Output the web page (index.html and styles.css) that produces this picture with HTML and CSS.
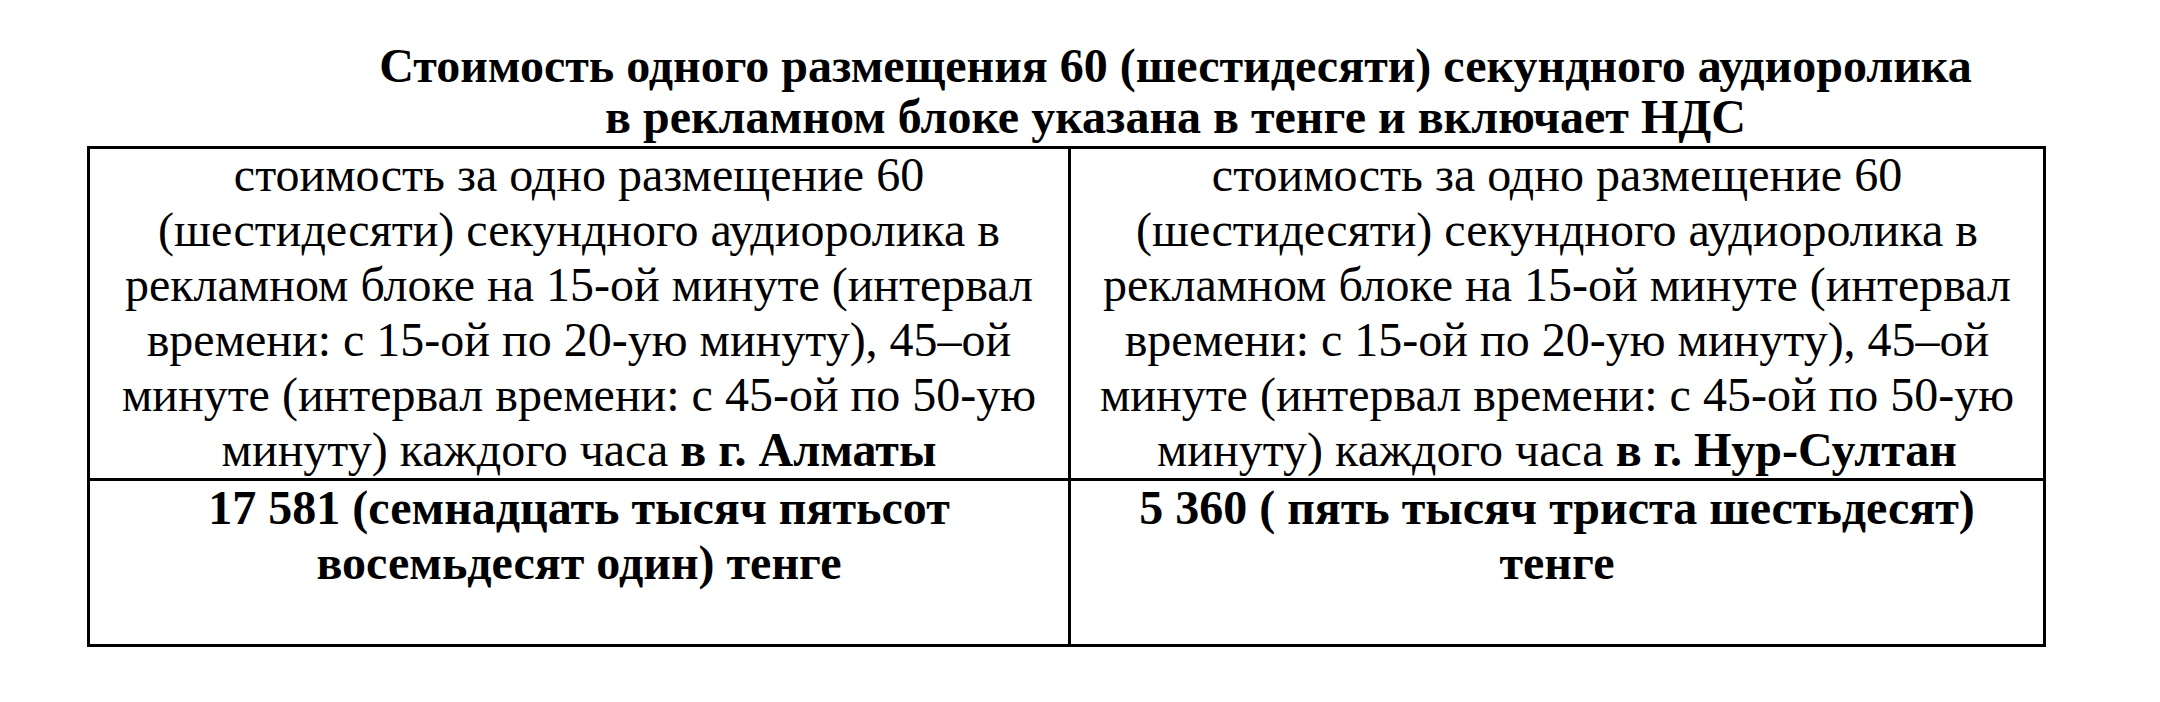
FILE: index.html
```html
<!DOCTYPE html>
<html>
<head>
<meta charset="utf-8">
<title>Стоимость размещения</title>
<link rel="stylesheet" href="styles.css">
</head>
<body>
<div class="page">
  <h1 class="title">Стоимость одного размещения 60 (шестидесяти) секундного аудиоролика<br>в рекламном блоке указана в тенге и включает НДС</h1>
  <table class="prices">
    <tr class="row-desc">
      <td class="cell-a"><p class="cell-text">стоимость за одно размещение 60<br>(шестидесяти) секундного аудиоролика в<br>рекламном блоке на 15-ой минуте (интервал<br>времени: с 15-ой по 20-ую минуту), 45–ой<br>минуте (интервал времени: с 45-ой по 50-ую<br>минуту) каждого часа <b>в г. Алматы</b></p></td>
      <td class="cell-b"><p class="cell-text">стоимость за одно размещение 60<br>(шестидесяти) секундного аудиоролика в<br>рекламном блоке на 15-ой минуте (интервал<br>времени: с 15-ой по 20-ую минуту), 45–ой<br>минуте (интервал времени: с 45-ой по 50-ую<br>минуту) каждого часа <b>в г. Нур-Султан</b></p></td>
    </tr>
    <tr class="row-price">
      <td class="cell-a"><p class="cell-text price">17 581 (семнадцать тысяч пятьсот<br>восемьдесят один) тенге</p></td>
      <td class="cell-b"><p class="cell-text price">5 360 ( пять тысяч триста шестьдесят)<br>тенге</p></td>
    </tr>
  </table>
</div>
</body>
</html>
```

FILE: styles.css
```css
html, body {
  margin: 0;
  padding: 0;
  background: #ffffff;
}

.page {
  font-family: "Liberation Serif", "Times New Roman", serif;
  color: #000;
  padding-top: 40px;
}

.title {
  margin: 0;
  padding-left: 191px;
  font-size: 48px;
  line-height: 51px;
  font-weight: bold;
  text-align: center;
}

.prices {
  margin: 4px 0 0 87px;
  width: 1959px;
  border-collapse: separate;
  border-spacing: 0;
  table-layout: fixed;
  border-top: 3px solid #000;
  border-left: 3px solid #000;
}

.prices td {
  box-sizing: border-box;
  border-right: 3px solid #000;
  border-bottom: 3px solid #000;
  vertical-align: top;
  text-align: center;
  padding: 0 8px;
}

.cell-a { width: 981px; }
.cell-b { width: 975px; }

.cell-text {
  margin: 0;
  font-size: 48px;
  line-height: 55px;
  white-space: nowrap;
}

.row-desc .cell-text {
  margin-top: -2px;
}

.row-desc td {
  padding-bottom: 1px;
}

.row-price .cell-text {
  margin-top: -1px;
}

.row-price td {
  padding-bottom: 54px;
}

.price {
  font-weight: bold;
}
```
